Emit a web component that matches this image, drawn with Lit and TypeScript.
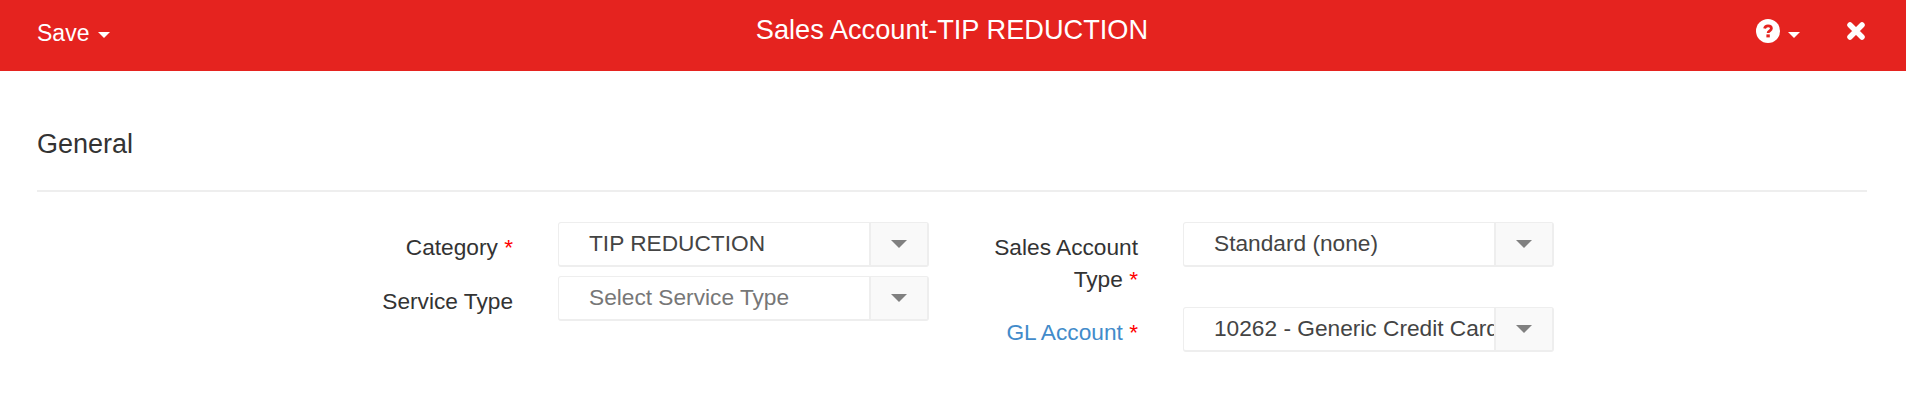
import { LitElement, html, css, TemplateResult } from 'lit';
import { customElement } from 'lit/decorators.js';

const caret = (cls: string): TemplateResult => html`<span class=${cls}></span>`;

@customElement('app-root')
export class AppRoot extends LitElement {
  private field(value: string, placeholder = false): TemplateResult {
    return html`
      <div class="select">
        <div class="value ${placeholder ? 'placeholder' : ''}">${value}</div>
        <div class="toggle">${caret('caret gray')}</div>
      </div>
    `;
  }

  protected render(): TemplateResult {
    return html`
      <header class="bar">
        <div class="left"><span>Save</span>${caret('caret white save')}</div>
        <div class="title">Sales Account-TIP REDUCTION</div>
        <div class="right">
          <svg class="help" viewBox="0 0 24 24" width="24" height="24">
            <circle cx="12" cy="12" r="12" fill="#fff"></circle>
            <path d="M8.600 9.600c.3-1.800 1.600-2.800 3.400-2.800 2 0 3.400 1.100 3.400 2.600 0 2.400-3.300 2.400-3.300 4.600" fill="none" stroke="#e5231f" stroke-width="2.800"></path>
            <rect x="10.400" y="15.400" width="3.400" height="3" fill="#e5231f"></rect>
          </svg>
          ${caret('caret white small')}
          <svg class="close" viewBox="0 0 20 20" width="20" height="20">
            <path d="M4 4L16 16M16 4L4 16" stroke="#fff" stroke-width="5.500" stroke-linecap="round"></path>
          </svg>
        </div>
      </header>
      <main class="content">
        <h2>General</h2>
        <form class="form">
          <div class="col col-a">
            <label>Category <em>*</em></label>
            ${this.field('TIP REDUCTION')}
            <label>Service Type</label>
            ${this.field('Select Service Type', true)}
          </div>
          <div class="col col-b">
            <label>Sales Account Type <em>*</em></label>
            ${this.field('Standard (none)')}
            <label><a>GL Account</a> <em>*</em></label>
            ${this.field('10262 - Generic Credit Card')}
          </div>
        </form>
      </main>
    `;
  }

  static styles = css`
    :host {
      display: block;
      font-family: 'Liberation Sans', Arial, sans-serif;
      font-size: 22.7px;
      color: #333;
      background: #fff;
      height: 413px;
    }
    .bar {
      height: 71px;
      background: #e5231f;
      color: #fff;
      display: grid;
      grid-template-columns: 1fr auto 1fr;
      box-sizing: border-box;
      padding: 0 37px;
    }
    .left {
      display: flex;
      align-items: center;
      gap: 9px;
      font-size: 23px;
      padding-bottom: 4px;
    }
    .title {
      font-size: 27.2px;
      line-height: 59px;
      padding-right: 2px;
    }
    .right {
      display: flex;
      justify-content: flex-end;
      align-items: center;
      padding-right: 3px;
      padding-bottom: 10px;
    }
    .help {
      margin-right: 8px;
    }
    .close {
      margin-left: 46px;
    }
    .caret {
      display: block;
      width: 0;
      height: 0;
      border-style: solid;
      border-color: transparent;
    }
    .caret.white {
      border-top-color: #fff;
    }
    .caret.save {
      border-width: 6.500px 6.500px 0;
      margin-top: 3px;
    }
    .caret.small {
      border-width: 6px 6px 0;
      margin-top: 8px;
    }
    .caret.gray {
      border-width: 8px 8px 0;
      border-top-color: #808080;
    }
    .content {
      padding: 0 39px 0 37px;
    }
    h2 {
      margin: 0;
      font-size: 27px;
      font-weight: 400;
      line-height: 32px;
      padding: 57px 0 30px;
      border-bottom: 2px solid #eee;
    }
    .form {
      display: flex;
      padding-top: 30px;
    }
    .col {
      display: grid;
      row-gap: 9px;
      align-content: start;
    }
    .col-a {
      grid-template-columns: 476px 371px;
      column-gap: 45px;
    }
    .col-b {
      grid-template-columns: 180px 371px;
      column-gap: 45px;
      margin-left: 29px;
    }
    label {
      text-align: right;
      line-height: 32px;
      padding: 9px 0 3px;
    }
    label a {
      color: #428bca;
    }
    em {
      color: #f00;
      font-style: normal;
    }
    .select {
      display: flex;
      height: 45px;
      box-sizing: border-box;
      border: 1px solid #eee;
      border-bottom-width: 2px;
      border-radius: 3px;
      color: #444;
    }
    .value {
      flex: 1;
      min-width: 0;
      overflow: hidden;
      white-space: nowrap;
      padding-left: 30px;
      line-height: 40px;
    }
    .value.placeholder {
      color: #777;
    }
    .toggle {
      width: 59px;
      background: #f9f9f9;
      border-left: 2px solid #eee;
      border-right: 1px solid #eee;
      box-sizing: border-box;
      display: flex;
      align-items: center;
      justify-content: center;
    }
  `;
}
